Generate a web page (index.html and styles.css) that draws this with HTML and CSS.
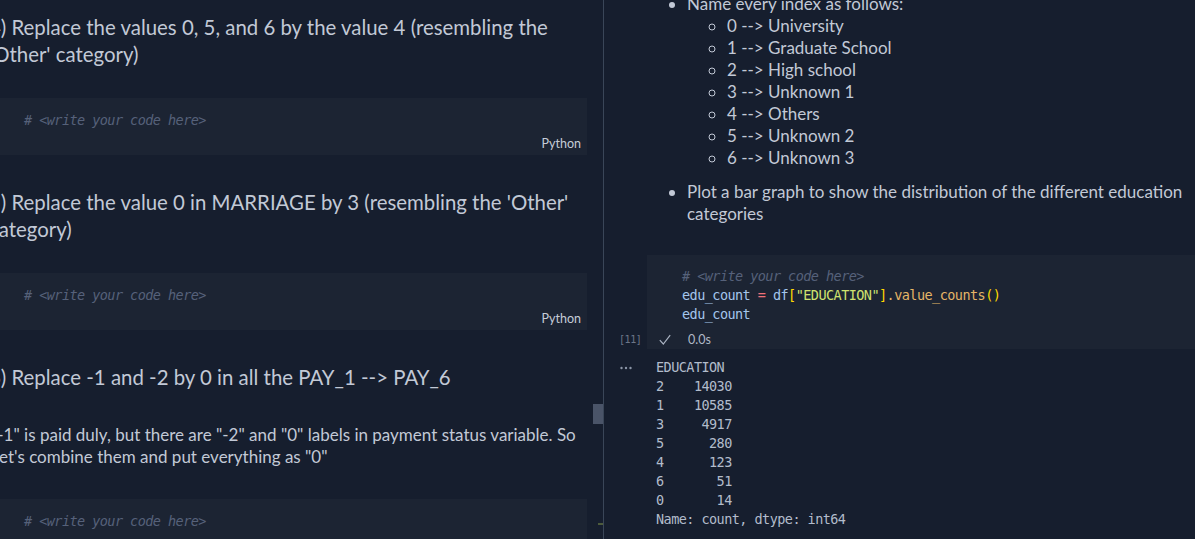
FILE: index.html
```html
<!DOCTYPE html>
<html lang="en">
<head>
<meta charset="utf-8">
<title>Notebook</title>
<link rel="stylesheet" href="styles.css">
</head>
<body>
<div class="workbench">
  <section class="pane pane-left">
    <div class="nb nb-left">
      <h3 class="md-h">4) Replace the values 0, 5, and 6 by the value 4 (resembling the<br>'Other' category)</h3>
      <div class="code-cell gap-30">
        <div class="code-line"><span class="tk-comment"># &lt;write your code here&gt;</span></div>
        <div class="lang">Python</div>
      </div>
      <h3 class="md-h gap-34">5) Replace the value 0 in MARRIAGE by 3 (resembling the 'Other'<br>category)</h3>
      <div class="code-cell gap-30">
        <div class="code-line"><span class="tk-comment"># &lt;write your code here&gt;</span></div>
        <div class="lang">Python</div>
      </div>
      <h3 class="md-h gap-34">6) Replace -1 and -2 by 0 in all the PAY_1 --&gt; PAY_6</h3>
      <p class="md-p gap-33">"-1" is paid duly, but there are "-2" and "0" labels in payment status variable. So<br>Let's combine them and put everything as "0"</p>
      <div class="code-cell gap-31">
        <div class="code-line"><span class="tk-comment"># &lt;write your code here&gt;</span></div>
        <div class="lang">Python</div>
      </div>
    </div>
    <div class="scroll-thumb"></div>
    <div class="ruler-mark"></div>
  </section>

  <section class="pane pane-right">
    <div class="nb nb-right">
      <div class="md-right">
        <ul class="md-list">
          <li>Name every index as follows:
            <ul class="md-sublist">
              <li>0 --&gt; University</li>
              <li>1 --&gt; Graduate School</li>
              <li>2 --&gt; High school</li>
              <li>3 --&gt; Unknown 1</li>
              <li>4 --&gt; Others</li>
              <li>5 --&gt; Unknown 2</li>
              <li>6 --&gt; Unknown 3</li>
            </ul>
          </li>
          <li class="li-gap">Plot a bar graph to show the distribution of the different education<br>categories</li>
        </ul>
      </div>

      <div class="run-row">
        <div class="gutter gutter-exec"><span class="exec-count">[11]</span></div>
        <div class="code-cell-r">
          <div class="code-block">
            <div class="code-line"><span class="tk-comment"># &lt;write your code here&gt;</span></div>
            <div class="code-line"><span class="tk-var">edu_count</span> <span class="tk-op">=</span> <span class="tk-var">df</span><span class="tk-br">[</span><span class="tk-str">"EDUCATION"</span><span class="tk-br">]</span><span class="tk-fn">.value_counts</span><span class="tk-br">()</span></div>
            <div class="code-line"><span class="tk-var">edu_count</span></div>
          </div>
          <div class="status-row">
            <svg class="check" width="12" height="12" viewBox="0 0 12 12"><polyline points="0.8,6.2 4.3,10 11.2,1.2" fill="none" stroke="#a9b2c1" stroke-width="1.2"/></svg>
            <span class="duration">0.0s</span>
          </div>
        </div>
      </div>

      <div class="out-row">
        <div class="gutter gutter-out">
          <svg class="dots" width="12" height="4" viewBox="0 0 12 4"><circle cx="1.5" cy="2" r="1.2" fill="#8b95a6"/><circle cx="6" cy="2" r="1.2" fill="#8b95a6"/><circle cx="10.5" cy="2" r="1.2" fill="#8b95a6"/></svg>
        </div>
        <pre class="output">EDUCATION
2    14030
1    10585
3     4917
5      280
4      123
6       51
0       14
Name: count, dtype: int64</pre>
      </div>
    </div>
  </section>
</div>
</body>
</html>
```

FILE: styles.css
```css
* { box-sizing: border-box; }

html, body {
  margin: 0;
  padding: 0;
  background: #161e2e;
}

body {
  font-family: Lato, "Open Sans", sans-serif;
  color: #c2c9d6;
  overflow: hidden;
}

.workbench {
  display: flex;
  width: 1195px;
  height: 539px;
}

.pane {
  position: relative;
  overflow: hidden;
  height: 100%;
}

.pane-left {
  width: 604px;
  flex: none;
  border-right: 1px solid #3a4658;
}

.pane-right {
  flex: 1;
}

/* left notebook (scrolled horizontally, so content starts a little off-screen) */
.nb-left {
  display: flex;
  flex-direction: column;
  margin-left: -11px;
  margin-right: 16px;
  padding-top: 14px;
}

.md-h {
  margin: 0;
  font-size: 20.4px;
  line-height: 27px;
  font-weight: 400;
  white-space: nowrap;
}

.md-p {
  margin: 0 0 0 2px;
  font-size: 17px;
  line-height: 22px;
  white-space: nowrap;
}

.gap-30 { margin-top: 30px; }
.gap-31 { margin-top: 31px; }
.gap-33 { margin-top: 33px; }
.gap-34 { margin-top: 34px; }

.code-cell {
  background: #1c2433;
  padding: 13px 6px 3px 35px;
}

.code-line {
  font-family: "DejaVu Sans Mono", monospace;
  font-size: 13.5px;
  letter-spacing: -0.55px;
  line-height: 19px;
  white-space: pre;
  color: #a4c6ec;
}

.lang {
  margin-top: 6px;
  text-align: right;
  font-size: 12.5px;
  line-height: 16px;
  color: #c5ccd8;
}

.tk-comment { color: #56617a; font-style: italic; }
.tk-var { color: #a4c6ec; }
.tk-op { color: #f07178; }
.tk-br { color: #ffd700; }
.tk-str { color: #cfe26f; }
.tk-fn { color: #e5b567; }

.scroll-thumb {
  position: absolute;
  left: 593px;
  top: 404px;
  width: 10px;
  height: 20px;
  background: #4a5468;
}

.ruler-mark {
  position: absolute;
  left: 598px;
  top: 523px;
  width: 5px;
  height: 2px;
  background: #4d5b3c;
}

/* right notebook (scrolled vertically) */
.nb-right {
  width: 640px;
  margin-top: -7px;
}

.md-right {
  padding-left: 43px;
  font-size: 17px;
  line-height: 22px;
  white-space: nowrap;
}

.md-list {
  margin: 0;
  padding-left: 40px;
}

.md-sublist {
  margin: 0;
  padding-left: 40px;
  list-style-type: circle;
}

.li-gap { margin-top: 12px; }

.run-row {
  display: flex;
  margin-top: 30px;
}

.gutter {
  width: 43px;
  flex: none;
}

.gutter-exec {
  display: flex;
  align-items: flex-end;
  padding-left: 15px;
  padding-bottom: 1px;
}

.exec-count {
  font-family: "DejaVu Sans Mono", monospace;
  font-size: 10px;
  letter-spacing: -0.4px;
  line-height: 17px;
  color: #6c7688;
}

.code-cell-r {
  flex: 1;
  background: #1c2433;
  padding: 12px 0 1px 0;
}

.code-block {
  padding-left: 35px;
}

.status-row {
  display: flex;
  align-items: center;
  gap: 17px;
  height: 17px;
  margin-top: 7px;
  padding-left: 12px;
}

.check { display: block; }

.duration {
  font-size: 12.5px;
  color: #b0b8c6;
}

.out-row {
  display: flex;
}

.gutter-out {
  padding-left: 16px;
  padding-top: 17px;
}

.dots { display: block; }

.output {
  margin: 0;
  padding: 9px 0 0 9px;
  font-family: "DejaVu Sans Mono", monospace;
  font-size: 13.5px;
  letter-spacing: -0.55px;
  line-height: 19px;
  color: #b2bccb;
}
```
